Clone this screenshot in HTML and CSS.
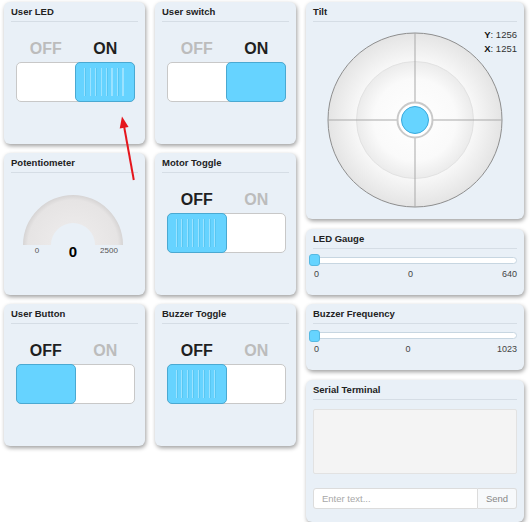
FILE: index.html
```html
<!DOCTYPE html>
<html>
<head>
<meta charset="utf-8">
<link rel="stylesheet" href="styles.css">
</head>
<body>
<div class="board">
  <div class="card a-userled">
    <div class="title">User LED</div>
    <div class="switch">
      <div class="labels"><span class="lbl dim">OFF</span><span class="lbl">ON</span></div>
      <div class="track"><div class="half"></div><div class="half knob right striped"></div></div>
    </div>
  </div>

  <div class="card a-userswitch">
    <div class="title">User switch</div>
    <div class="switch">
      <div class="labels"><span class="lbl dim">OFF</span><span class="lbl">ON</span></div>
      <div class="track"><div class="half"></div><div class="half knob right"></div></div>
    </div>
  </div>

  <div class="card a-tilt">
    <div class="title">Tilt</div>
    <div class="readout">
      <div><b>Y</b>: 1256</div>
      <div><b>X</b>: 1251</div>
    </div>
    <svg class="joy" width="178" height="178" viewBox="0 0 178 178">
      <defs>
        <radialGradient id="go" cx="50%" cy="50%" r="50%">
          <stop offset="0" stop-color="#ffffff"/>
          <stop offset="0.65" stop-color="#f9f9f9"/>
          <stop offset="1" stop-color="#e4e4e4"/>
        </radialGradient>
        <radialGradient id="gi" cx="50%" cy="50%" r="50%">
          <stop offset="0" stop-color="#ffffff"/>
          <stop offset="0.7" stop-color="#fafafa"/>
          <stop offset="1" stop-color="#ebebeb"/>
        </radialGradient>
      </defs>
      <circle cx="89" cy="89" r="87" fill="url(#go)" stroke="#8e8e8e" stroke-width="1"/>
      <circle cx="89" cy="89" r="58.5" fill="url(#gi)" stroke="#e2e2e2" stroke-width="1"/>
      <line x1="89" y1="2" x2="89" y2="176" stroke="#a9a9a9" stroke-width="1"/>
      <line x1="2" y1="89" x2="176" y2="89" stroke="#a9a9a9" stroke-width="1"/>
      <circle cx="89" cy="89" r="17.5" fill="#ffffff" stroke="#c9c9c9" stroke-width="2"/>
      <circle cx="89" cy="89" r="13.5" fill="#66d4ff" stroke="#38a9dc" stroke-width="1"/>
    </svg>
  </div>

  <div class="card a-pot">
    <div class="title">Potentiometer</div>
    <div class="gauge">
      <svg width="100" height="51" viewBox="0 0 100 51">
        <defs>
          <radialGradient id="gg" cx="50" cy="50" r="50" gradientUnits="userSpaceOnUse">
            <stop offset="0.44" stop-color="#ebe9e9"/>
            <stop offset="0.9" stop-color="#e6e4e4"/>
            <stop offset="1" stop-color="#d6d4d4"/>
          </radialGradient>
        </defs>
        <path d="M0,50 A50,50 0 0 1 100,50 L72,50 A22,22 0 0 0 28,50 Z" fill="url(#gg)"/>
      </svg>
      <div class="gauge-labels">
        <span class="g-min">0</span>
        <span class="g-val">0</span>
        <span class="g-max">2500</span>
      </div>
    </div>
  </div>

  <div class="card a-motor">
    <div class="title">Motor Toggle</div>
    <div class="switch">
      <div class="labels"><span class="lbl">OFF</span><span class="lbl dim">ON</span></div>
      <div class="track"><div class="half knob left striped"></div><div class="half"></div></div>
    </div>
  </div>

  <div class="card a-ledgauge">
    <div class="title">LED Gauge</div>
    <div class="slider"><div class="handle"></div></div>
    <div class="scale"><span>0</span><span>0</span><span>640</span></div>
  </div>

  <div class="card a-userbutton">
    <div class="title">User Button</div>
    <div class="switch">
      <div class="labels"><span class="lbl">OFF</span><span class="lbl dim">ON</span></div>
      <div class="track"><div class="half knob left"></div><div class="half"></div></div>
    </div>
  </div>

  <div class="card a-buzzer">
    <div class="title">Buzzer Toggle</div>
    <div class="switch">
      <div class="labels"><span class="lbl">OFF</span><span class="lbl dim">ON</span></div>
      <div class="track"><div class="half knob left striped"></div><div class="half"></div></div>
    </div>
  </div>

  <div class="card a-freq">
    <div class="title">Buzzer Frequency</div>
    <div class="slider"><div class="handle"></div></div>
    <div class="scale"><span>0</span><span>0</span><span>1023</span></div>
  </div>

  <div class="card a-serial">
    <div class="title">Serial Terminal</div>
    <div class="term"></div>
    <div class="sendrow">
      <input class="entry" type="text" placeholder="Enter text...">
      <button class="send">Send</button>
    </div>
  </div>
</div>

<svg class="arrow" width="532" height="524" viewBox="0 0 532 524">
  <line x1="133.8" y1="180" x2="124.2" y2="127" stroke="#e5161d" stroke-width="2"/>
  <polygon points="122,116.5 128.6,127 119.7,128.6" fill="#e5161d"/>
</svg>
</body>
</html>
```

FILE: styles.css
```css
* { box-sizing: border-box; }

body {
  margin: 0;
  background: #ffffff;
  font-family: "Liberation Sans", Arial, sans-serif;
  color: #222;
}

.board {
  display: grid;
  grid-template-columns: 141px 141px 218px;
  grid-auto-rows: 66px;
  column-gap: 10px;
  row-gap: 9.6px;
  padding: 2px 0 0 4px;
}

.a-userled    { grid-column: 1; grid-row: 1 / span 2; }
.a-userswitch { grid-column: 2; grid-row: 1 / span 2; }
.a-tilt       { grid-column: 3; grid-row: 1 / span 3; }
.a-pot        { grid-column: 1; grid-row: 3 / span 2; }
.a-motor      { grid-column: 2; grid-row: 3 / span 2; }
.a-ledgauge   { grid-column: 3; grid-row: 4; }
.a-userbutton { grid-column: 1; grid-row: 5 / span 2; }
.a-buzzer     { grid-column: 2; grid-row: 5 / span 2; }
.a-freq       { grid-column: 3; grid-row: 5; }
.a-serial     { grid-column: 3; grid-row: 6 / span 2; }

.card {
  background: #e9f0f7;
  border-radius: 6px;
  box-shadow: 1px 2px 4px rgba(0, 0, 0, 0.38);
  position: relative;
}

.title {
  margin: 0 7px;
  padding: 4px 0 4px;
  font-size: 9.5px;
  line-height: 11px;
  font-weight: bold;
  color: #222;
  border-bottom: 1px solid #d5dde5;
}

/* toggle switches */
.switch {
  margin: 18px 0 0 12px;
  width: 119px;
}

.labels {
  display: flex;
  height: 18px;
  margin-bottom: 4px;
}

.lbl {
  flex: 1;
  text-align: center;
  font-size: 16px;
  line-height: 18px;
  font-weight: bold;
  color: #1f1f1f;
}

.lbl.dim { color: #bcbcbc; }

.track {
  display: flex;
  height: 40px;
  border: 1px solid #c8c8c8;
  border-radius: 5px;
  background: #ffffff;
}

.half { flex: 1; }

.knob {
  background: #66d3ff;
  border: 1px solid #4aa9d2;
  border-radius: 5px;
  display: flex;
  align-items: center;
  justify-content: center;
}

.knob.right { margin: -1px -1px -1px 0; }
.knob.left  { margin: -1px 0 -1px -1px; }

.knob.striped::before {
  content: "";
  width: 43px;
  height: 28px;
  background: repeating-linear-gradient(90deg,
    #a8e6ff 0, #a8e6ff 1px,
    #55c4ef 1px, #55c4ef 1.6px,
    transparent 1.6px, transparent 5.5px);
  opacity: 0.8;
}

/* gauge */
.gauge {
  margin: 22px 0 0 19px;
  width: 100px;
}

.gauge svg { display: block; }

.gauge-labels {
  display: flex;
  align-items: flex-start;
  margin-top: -2px;
}

.g-min, .g-max {
  width: 28px;
  text-align: center;
  font-size: 8px;
  line-height: 8px;
  padding-top: 3px;
  color: #555;
}

.g-val {
  flex: 1;
  text-align: center;
  font-size: 15px;
  line-height: 15px;
  font-weight: bold;
  color: #000;
}

/* tilt */
.readout {
  position: absolute;
  top: 26px;
  right: 7px;
  text-align: right;
  font-size: 9.5px;
  line-height: 14px;
  color: #333;
}

.readout b { color: #111; }

.joy {
  display: block;
  margin: 9px auto 0;
}

/* sliders */
.slider {
  position: relative;
  margin: 8px 7px 0 7px;
  height: 7px;
  border: 1px solid #c7d6e1;
  border-radius: 4px;
  background: #ffffff;
}

.handle {
  position: absolute;
  left: -5px;
  top: -3.5px;
  width: 11px;
  height: 12px;
  border-radius: 3px;
  background: #66d4ff;
  border: 1px solid #56b9e2;
}

.scale {
  display: flex;
  justify-content: space-between;
  margin: 5px 7px 0 8px;
  font-size: 9px;
  line-height: 10px;
  color: #444;
}

/* serial */
.term {
  margin: 9px 7px 0;
  height: 65px;
  background: #f4f4f4;
  border: 1px solid #e2e2e2;
  border-radius: 2px;
}

.sendrow {
  display: flex;
  margin: 14px 7px 0;
  height: 21px;
}

.entry {
  flex: 1;
  min-width: 0;
  margin: 0;
  height: 21px;
  padding: 0 8px;
  border: 1px solid #dcdcdc;
  border-radius: 3px 0 0 3px;
  background: #ffffff;
  font-family: "Liberation Sans", Arial, sans-serif;
  font-size: 9.5px;
  color: #333;
  outline: none;
}

.entry::placeholder { color: #a8a8a8; }

.send {
  width: 39px;
  height: 21px;
  margin: 0;
  padding: 0;
  border: 1px solid #dcdcdc;
  border-left: none;
  border-radius: 0 3px 3px 0;
  background: #f7f9fb;
  font-family: "Liberation Sans", Arial, sans-serif;
  font-size: 9.5px;
  color: #888;
}

/* annotation arrow */
.arrow {
  position: absolute;
  left: 0;
  top: 0;
  pointer-events: none;
}
```
